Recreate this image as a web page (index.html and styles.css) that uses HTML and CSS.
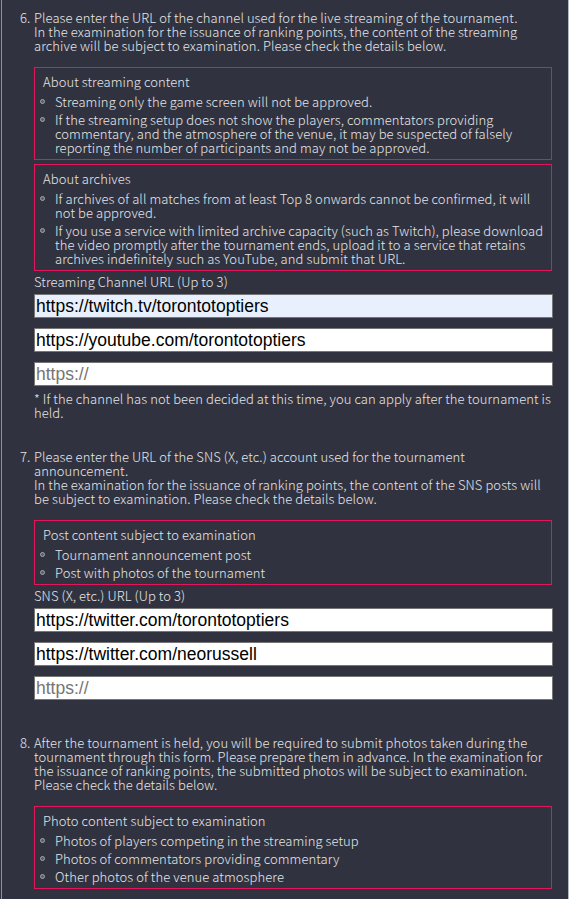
FILE: index.html
```html
<!DOCTYPE html>
<html lang="en">
<head>
<meta charset="utf-8">
<title>Tournament application</title>
<link rel="stylesheet" href="styles.css">
</head>
<body>
<div class="page">
  <section class="q">
    <div class="num">6.</div>
    <div class="body">
      <p class="qtext">Please enter the URL of the channel used for the live streaming of the tournament.<br>In the examination for the issuance of ranking points, the content of the streaming archive will be subject to examination. Please check the details below.</p>
      <div class="box">
        <div class="box-title">About streaming content</div>
        <ul class="list">
          <li>Streaming only the game screen will not be approved.</li>
          <li>If the streaming setup does not show the players, commentators providing commentary, and the atmosphere of the venue, it may be suspected of falsely reporting the number of participants and may not be approved.</li>
        </ul>
      </div>
      <div class="box box-next">
        <div class="box-title">About archives</div>
        <ul class="list">
          <li>If archives of all matches from at least Top 8 onwards cannot be confirmed, it will not be approved.</li>
          <li>If you use a service with limited archive capacity (such as Twitch), please download the video promptly after the tournament ends, upload it to a service that retains archives indefinitely such as YouTube, and submit that URL.</li>
        </ul>
      </div>
      <label class="field-label">Streaming Channel URL (Up to 3)</label>
      <div class="inputs">
        <input class="url autofill" type="text" value="https://twitch.tv/torontotoptiers">
        <input class="url" type="text" value="https://youtube.com/torontotoptiers">
        <input class="url" type="text" placeholder="https://">
      </div>
      <p class="note">* If the channel has not been decided at this time, you can apply after the tournament is held.</p>
    </div>
  </section>

  <section class="q">
    <div class="num">7.</div>
    <div class="body">
      <p class="qtext">Please enter the URL of the SNS (X, etc.) account used for the tournament announcement.<br>In the examination for the issuance of ranking points, the content of the SNS posts will be subject to examination. Please check the details below.</p>
      <div class="box">
        <div class="box-title">Post content subject to examination</div>
        <ul class="list">
          <li>Tournament announcement post</li>
          <li>Post with photos of the tournament</li>
        </ul>
      </div>
      <label class="field-label">SNS (X, etc.) URL (Up to 3)</label>
      <div class="inputs inputs-last">
        <input class="url" type="text" value="https://twitter.com/torontotoptiers">
        <input class="url" type="text" value="https://twitter.com/neorussell">
        <input class="url" type="text" placeholder="https://">
      </div>
    </div>
  </section>

  <section class="q">
    <div class="num">8.</div>
    <div class="body">
      <p class="qtext">After the tournament is held, you will be required to submit photos taken during the tournament through this form. Please prepare them in advance. In the examination for the issuance of ranking points, the submitted photos will be subject to examination. Please check the details below.</p>
      <div class="box">
        <div class="box-title">Photo content subject to examination</div>
        <ul class="list">
          <li>Photos of players competing in the streaming setup</li>
          <li>Photos of commentators providing commentary</li>
          <li>Other photos of the venue atmosphere</li>
        </ul>
      </div>
    </div>
  </section>
</div>
</body>
</html>
```

FILE: styles.css
```css
html, body {
  margin: 0;
  padding: 0;
  background: #30333f;
}

body {
  font-family: "Noto Sans CJK JP", "Noto Sans", sans-serif;
  font-weight: 300;
  font-size: 13px;
  line-height: 14px;
  letter-spacing: 0.08px;
  color: #e6e6ea;
}

.page {
  margin-left: 1px;
  width: 568px;
  min-height: 899px;
  border-left: 1px solid #8e929c;
  border-right: 1px solid #b4b8c0;
  padding: 11px 0 0 18px;
  box-sizing: border-box;
}

.q {
  display: grid;
  grid-template-columns: 14px 518px;
  margin-bottom: 30px;
}

.num {
  white-space: nowrap;
}

.qtext {
  margin: 0;
}

.box {
  margin-top: 14px;
  border: 1px solid #e4155b;
  padding: 7px 6px 4px 8px;
}

.box-next {
  margin-top: 4px;
}

.box-title {
  line-height: 14px;
}

.list {
  list-style: none;
  margin: 6px 0 0;
  padding: 0 0 0 12px;
}

.list li {
  position: relative;
  margin-top: 4px;
}

.list li:first-child {
  margin-top: 0;
}

.list li::before {
  content: "";
  position: absolute;
  left: -15px;
  top: 4px;
  width: 3px;
  height: 3px;
  border: 1px solid #a4a6ac;
  border-radius: 50%;
  background: #5a5d66;
}

.field-label {
  display: block;
  margin-top: 4px;
}

.inputs {
  display: flex;
  flex-direction: column;
  gap: 10px;
  margin-top: 5px;
}

.inputs-last {
  margin-bottom: 6px;
}

.url {
  display: block;
  box-sizing: border-box;
  width: 519px;
  height: 24px;
  margin: 0;
  padding: 0 0 0 1px;
  border: 1px solid #767676;
  background: #ffffff;
  color: #000000;
  font-family: "Liberation Sans", Arial, sans-serif;
  font-size: 17.5px;
  font-weight: 400;
  letter-spacing: 0;
  outline: none;
}

.url::placeholder {
  color: #757575;
}

.autofill {
  background: #e8f0fe;
}

.note {
  margin: 6px 0 0;
}
```
